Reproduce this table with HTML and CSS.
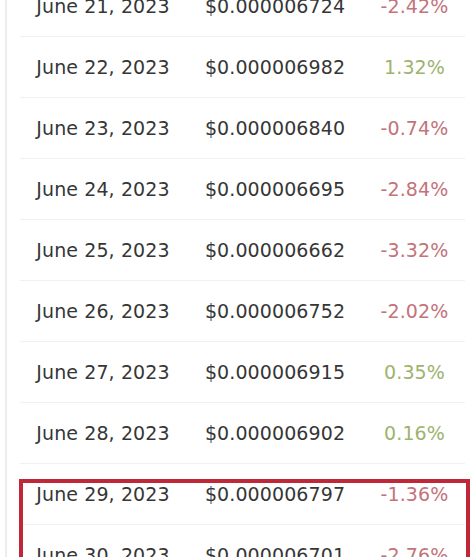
FILE: index.html
```html
<!DOCTYPE html>
<html lang="en">
<head>
<meta charset="utf-8">
<title>Price history</title>
<link rel="stylesheet" href="styles.css">
</head>
<body>
<div class="page">
  <table class="prices">
    <tbody>
      <tr><td>June 21, 2023</td><td>$0.000006724</td><td class="down">-2.42%</td></tr>
      <tr><td>June 22, 2023</td><td>$0.000006982</td><td class="up">1.32%</td></tr>
      <tr><td>June 23, 2023</td><td>$0.000006840</td><td class="down">-0.74%</td></tr>
      <tr><td>June 24, 2023</td><td>$0.000006695</td><td class="down">-2.84%</td></tr>
      <tr><td>June 25, 2023</td><td>$0.000006662</td><td class="down">-3.32%</td></tr>
      <tr><td>June 26, 2023</td><td>$0.000006752</td><td class="down">-2.02%</td></tr>
      <tr><td>June 27, 2023</td><td>$0.000006915</td><td class="up">0.35%</td></tr>
      <tr><td>June 28, 2023</td><td>$0.000006902</td><td class="up">0.16%</td></tr>
      <tr><td>June 29, 2023</td><td>$0.000006797</td><td class="down">-1.36%</td></tr>
      <tr><td>June 30, 2023</td><td>$0.000006701</td><td class="down">-2.76%</td></tr>
    </tbody>
  </table>
  <div class="highlight"></div>
</div>
</body>
</html>
```
FILE: styles.css
```css
html, body {
  margin: 0;
  padding: 0;
  background: #ffffff;
  overflow: hidden;
}

.page {
  position: relative;
  display: flow-root;
  margin-left: 5px;
  border-left: 2px solid #ededed;
  padding-left: 13px;
  height: 700px;
}

.prices {
  margin-top: -24px;
  width: 445px;
  border-collapse: collapse;
  font-family: "DejaVu Sans", sans-serif;
  font-size: 19px;
  letter-spacing: 0.1px;
  color: #363636;
}

.prices td {
  height: 60px;
  padding: 0;
  text-align: center;
  vertical-align: middle;
  border-bottom: 1px solid #f1f1f1;
  white-space: nowrap;
}

.prices td:nth-child(1) { width: 166px; }
.prices td:nth-child(2) { width: 178px; }

.prices .up { color: #9db36e; }
.prices .down { color: #c3737a; }

.highlight {
  position: absolute;
  left: 12px;
  top: 479px;
  width: 443px;
  height: 120px;
  border: 4px solid #c0283a;
}
```
